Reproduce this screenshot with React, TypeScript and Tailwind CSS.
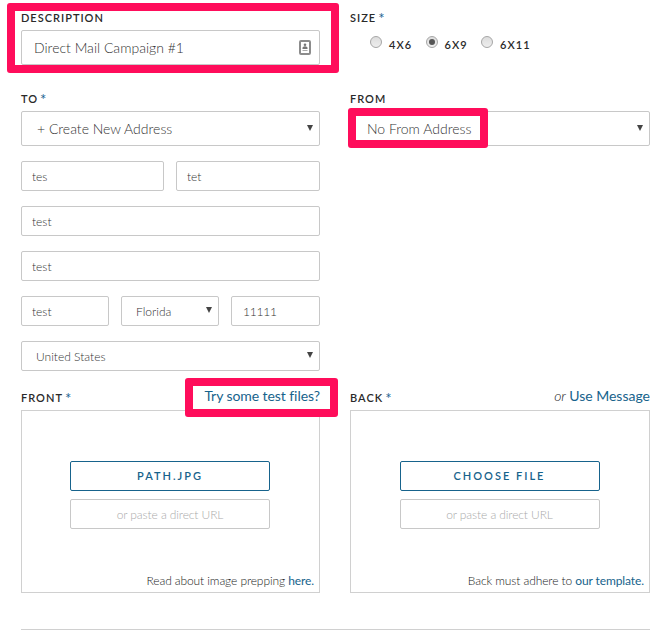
import React from "react";

interface LabelProps {
  text: string;
  required?: boolean;
}

interface FieldProps {
  value: string;
  className?: string;
  select?: boolean;
}

interface UploadProps {
  action: string;
  note: string;
  link: string;
}

const SIZES = ["4X6", "6X9", "6X11"];

const Label: React.FC<LabelProps> = ({ text, required = false }) => (
  <div className="flex h-4 gap-[2px] whitespace-nowrap text-[11px] leading-4 font-semibold tracking-[1px] text-[#2a2a2a]">
    <span>{text}</span>
    {required && <span className="text-[15px] leading-4 font-normal text-[#1a6591]">*</span>}
  </div>
);

const Arrow: React.FC = () => (
  <svg className="h-[6px] w-[6px] shrink-0" viewBox="0 0 6 6">
    <path d="M0 0h6L3 6z" fill="#444444" />
  </svg>
);

const Field: React.FC<FieldProps> = ({ value, className = "", select = false }) => (
  <div
    className={`flex h-[30px] items-center justify-between rounded-[2px] border border-[#c8c8c8] bg-white pt-[2px] pr-[6px] text-[12px] font-light whitespace-nowrap text-[#333333] ${className}`}
  >
    <span>{value}</span>
    {select && (
      <span className="pb-1">
        <Arrow />
      </span>
    )}
  </div>
);

const BigField: React.FC<FieldProps> = ({ value, className = "", select = false }) => (
  <div
    className={`flex h-[35px] items-center justify-between rounded-[2px] border border-[#c8c8c8] bg-white pr-[6px] text-[14px] font-light whitespace-nowrap text-[#333333] ${className}`}
  >
    <span className="pb-px">{value}</span>
    {select && (
      <span className="pb-[2px]">
        <Arrow />
      </span>
    )}
  </div>
);

const ContactIcon: React.FC = () => (
  <svg className="mr-[2px] h-[15px] w-[12px]" viewBox="0 0 12 15">
    <rect x="1" y="1" width="10" height="13" rx="1" fill="#ffffff" stroke="#8c8c8c" strokeWidth="2" />
    <circle cx="6" cy="4.8" r="1.3" fill="#777777" />
    <path d="M3.5 9V7.5Q6 5 8.5 7.5V9z" fill="#777777" />
    <path d="M3.5 10.5h5" stroke="#aaaaaa" />
  </svg>
);

const Radio: React.FC<{ checked: boolean }> = ({ checked }) => (
  <span className="flex h-3 w-3 items-center justify-center rounded-full border border-[#a6a6a6] bg-linear-to-b from-[#dddddd] to-[#eeeeee]">
    {checked && <span className="h-[6px] w-[6px] rounded-full bg-[#555555]" />}
  </span>
);

const Highlight: React.FC<{ className: string }> = ({ className }) => (
  <div className={`pointer-events-none absolute z-10 rounded-[3px] border-8 border-[#ff0d5b] ${className}`} />
);

const Upload: React.FC<UploadProps> = ({ action, note, link }) => (
  <div className="flex h-[183px] flex-col border border-[#d0d0d0] pt-[50px]">
    <div className="flex flex-col pr-px">
      <button className="mx-auto h-[30px] w-[200px] rounded-[2px] border border-[#17638c] text-[11px] font-semibold tracking-[2px] text-[#17638c]">
        {action}
      </button>
      <div className="mx-auto mt-2 h-[30px] w-[200px] rounded-[2px] border border-[#c8c8c8] text-center text-[12px] leading-[30px] font-light tracking-[-0.1px] text-[#aaaaaa]">
        or paste a direct URL
      </div>
    </div>
    <div className="mt-auto mb-1 self-end pr-[5px] text-[12px] leading-[15px] font-light tracking-[-0.1px] whitespace-nowrap text-[#222222]">
      {note} <span className="font-normal text-[#17638c]">{link}</span>
    </div>
  </div>
);

const App: React.FC = () => (
  <main className="relative h-[634px] w-[672px] overflow-hidden bg-white pt-[10px] pl-[21px] font-[Lato,sans-serif]">
    <div className="flex h-[81px] gap-[30px]">
      <section className="relative w-[299px]">
        <Label text="DESCRIPTION" />
        <div className="relative mt-1">
          <BigField value="Direct Mail Campaign #1" className="pl-3" />
          <div className="absolute top-[10px] right-[7px]">
            <ContactIcon />
          </div>
        </div>
        <Highlight className="-top-[7px] -left-[14px] h-[70px] w-[332px]" />
      </section>
      <section className="w-[300px]">
        <Label text="SIZE" required />
        <div className="mt-[10px] ml-5 flex">
          {SIZES.map((size) => (
            <div key={size} className="mr-3 flex gap-[7px]">
              <Radio checked={size === "6X9"} />
              <span className="w-[24.5px] pt-px text-[11px] leading-4 font-semibold tracking-[1.1px] text-[#2a2a2a]">
                {size}
              </span>
            </div>
          ))}
        </div>
      </section>
    </div>

    <div className="flex h-[299px] gap-[30px]">
      <section className="w-[299px]">
        <Label text="TO" required />
        <div className="mt-1 flex flex-col gap-[15px]">
          <BigField value="+ Create New Address" className="pl-[15px]" select />
          <div className="flex gap-3">
            <Field value="tes" className="w-[143px] pl-[10px]" />
            <Field value="tet" className="w-[144px] pl-[10px]" />
          </div>
          <Field value="test" className="pl-[10px]" />
          <Field value="test" className="pl-[10px]" />
          <div className="flex gap-3">
            <Field value="test" className="w-[88px] pl-[10px]" />
            <Field value="Florida" className="w-[98px] pl-[14px]" select />
            <Field value="11111" className="w-[89px] pl-[11px] tracking-[-0.2px]" />
          </div>
          <Field value="United States" className="pl-[14px]" select />
        </div>
      </section>
      <section className="relative w-[300px]">
        <Label text="FROM" />
        <div className="mt-1">
          <BigField value="No From Address" className="pl-4" select />
        </div>
        <Highlight className="top-[17px] -left-[2px] h-[40px] w-[140px]" />
      </section>
    </div>

    <div className="flex gap-[30px]">
      <section className="relative w-[299px]">
        <div className="flex h-5 justify-between">
          <Label text="FRONT" required />
          <a className="-mt-1 text-[14px] leading-5 tracking-[-0.07px] whitespace-nowrap text-[#17638c]">
            Try some test files?
          </a>
        </div>
        <Upload action="PATH.JPG" note="Read about image prepping" link="here." />
        <Highlight className="-top-[12px] left-[164px] h-[39px] w-[153px]" />
      </section>
      <section className="w-[300px]">
        <div className="flex h-5 justify-between">
          <Label text="BACK" required />
          <div className="-mt-1 text-[14px] leading-5 whitespace-nowrap text-[#17638c]">
            <em className="font-light tracking-[-0.2px] text-[#222222]">or</em> Use Message
          </div>
        </div>
        <Upload action="CHOOSE FILE" note="Back must adhere to" link="our template." />
      </section>
    </div>
    <hr className="mt-9 w-[629px] border-[#d0d0d0]" />
  </main>
);

export default App;
